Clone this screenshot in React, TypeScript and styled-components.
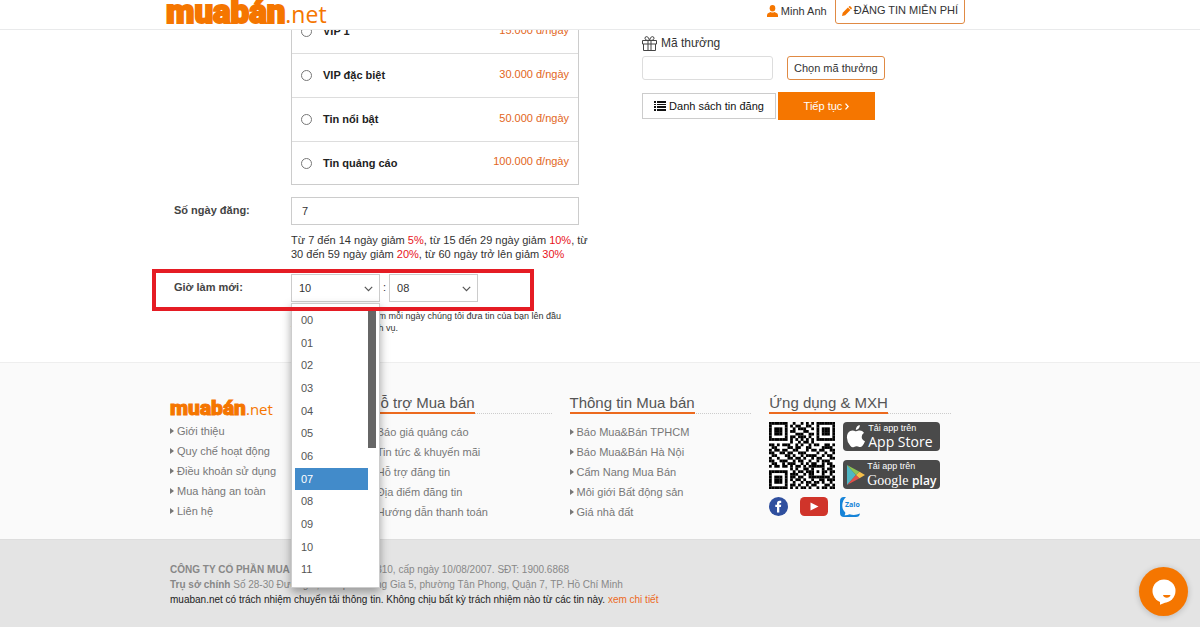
import React from "react";
import styled, { createGlobalStyle } from "styled-components";

const orange = "#f57600";
const sans = '"Liberation Sans", Arial, sans-serif';

const GlobalStyle = createGlobalStyle`
  *, *::before, *::after { box-sizing: border-box; }
  body { margin: 0; background: #fff; color: #333; font: 11px/15px ${sans}; }
  button, input, select { font: inherit; color: inherit; margin: 0; }
  a { color: inherit; text-decoration: none; }
  ul { list-style: none; margin: 0; padding: 0; }
  p, h2 { margin: 0; }
`;

const Container = styled.div`
  padding: 0 235px 0 166px;
`;

const Header = styled.header`
  position: fixed;
  inset: 0 0 auto 0;
  z-index: 5;
  height: 30px;
  overflow: hidden;
  background: #fff;
  border-bottom: 1px solid #e9eaeb;
`;

const HeaderBar = styled(Container)`
  display: flex;
  justify-content: space-between;
  align-items: flex-end;
  height: 24px;
`;

const Logo = styled.a<{ $small?: boolean }>`
  display: flex;
  align-items: baseline;
  color: ${orange};
  font: 900 ${(p) => (p.$small ? "21px/20px" : "33px/32px")} Roboto, sans-serif;
  -webkit-text-stroke: ${(p) => (p.$small ? 1 : 2)}px ${orange};
  span {
    font: 500 ${(p) => (p.$small ? "15px/20px" : "23px/32px")} "Open Sans", sans-serif;
    -webkit-text-stroke: 0;
  }
`;

const HeaderLogo = styled(Logo)`
  margin-bottom: -6px;
`;

const Actions = styled.nav`
  display: flex;
  align-items: flex-end;
  gap: 8px;
`;

const User = styled.a`
  display: flex;
  align-items: center;
  gap: 3px;
  height: 26px;
`;

const OutlineButton = styled.button`
  display: flex;
  align-items: center;
  justify-content: center;
  gap: 2px;
  height: 24px;
  padding: 0 6px;
  background: #fff;
  border: 1px solid #e08a44;
  border-radius: 3px;
  white-space: nowrap;
`;

const PostButton = styled(OutlineButton)`
  height: 27px;
`;

const Main = styled.main`
  padding-top: 10px;
`;

const Columns = styled(Container)`
  display: grid;
  grid-template-columns: 413px 1fr;
  gap: 63px;
  min-height: 352px;
`;

const Form = styled.form`
  display: grid;
  grid-template-columns: 125px minmax(0, 1fr);
  align-content: start;
`;

const Plans = styled.div`
  grid-column: 2;
  border: 1px solid #ccc;
  border-top: 0;
  margin-bottom: 12px;
`;

const Plan = styled.label`
  display: flex;
  align-items: center;
  height: 44px;
  padding: 0 9px;
  color: #222;
  font-weight: 700;
  border-bottom: 1px solid #ddd;
  &:last-child { height: 42px; border-bottom: 0; }
`;

const Radio = styled.input`
  appearance: none;
  width: 11px;
  height: 11px;
  margin: 0 11px 0 0;
  border: 1px solid #777;
  border-radius: 50%;
`;

const Price = styled.span`
  margin-left: auto;
  padding-bottom: 3px;
  color: #e2661c;
  font-weight: 400;
`;

const Label = styled.label`
  padding: 6px 8px;
  font-weight: 700;
  color: #444;
`;

const DaysInput = styled.input`
  height: 28px;
  padding: 0 10px;
  background: #fff;
  border: 1px solid #ccc;
`;

const Hint = styled.p`
  grid-column: 2;
  padding: 8px 0 13px;
  line-height: 14px;
  white-space: nowrap;
  b { font-weight: 400; color: #e8131b; }
`;

const RefreshRow = styled.div`
  position: relative;
  grid-column: 1 / -1;
  display: grid;
  grid-template-columns: 125px 1fr;
`;

const Highlight = styled.div`
  position: absolute;
  z-index: 4;
  inset: -5px 45px -9px -14px;
  border: 4px solid #e51c24;
  pointer-events: none;
`;

const Times = styled.div`
  display: flex;
  gap: 3px;
`;

const Colon = styled.span`
  line-height: 26px;
`;

const TimeField = styled.div`
  position: relative;
  width: 89px;
`;

const TimeSelect = styled.select`
  appearance: none;
  width: 100%;
  height: 28px;
  padding: 0 7px;
  background: #fff;
  border: 1px solid #ccc;
  border-radius: 0;
`;

const Chevron = styled.svg`
  position: absolute;
  right: 7px;
  top: 12px;
`;

const Menu = styled.div`
  position: absolute;
  z-index: 3;
  top: 29px;
  left: 0;
  display: flex;
  width: 89px;
  height: 285px;
  padding: 5px 3px 6px;
  background: #fff;
  border: 1px solid #ccc;
  box-shadow: 0 4px 9px rgba(0, 0, 0, 0.35);
`;

const Options = styled.ul`
  flex: 1;
  display: flex;
  flex-direction: column;
`;

const Option = styled.li<{ $active: boolean }>`
  flex: 1;
  display: flex;
  align-items: center;
  padding: 0 6px;
  color: ${(p) => (p.$active ? "#fff" : "#555")};
  background: ${(p) => (p.$active ? "#428bca" : "transparent")};
`;

const Thumb = styled.div`
  width: 8px;
  height: 139px;
  background: #666;
`;

const Note = styled.p`
  grid-column: 2;
  padding-top: 8px;
  font-size: 9px;
  line-height: 12px;
  white-space: nowrap;
`;

const Side = styled.section`
  padding-top: 25px;
`;

const RewardLabel = styled.label`
  display: flex;
  align-items: center;
  gap: 4px;
  height: 16px;
  margin-bottom: 5px;
  font-size: 12px;
`;

const SideRow = styled.div<{ $gap: number }>`
  display: flex;
  align-items: center;
  gap: ${(p) => p.$gap}px;
  margin-bottom: 12px;
`;

const RewardInput = styled.input`
  width: 131px;
  height: 24px;
  border: 1px solid #ddd;
  border-radius: 3px;
`;

const ListButton = styled.button`
  display: flex;
  align-items: center;
  justify-content: center;
  gap: 3px;
  width: 134px;
  height: 26px;
  padding: 0;
  background: #fff;
  border: 1px solid #ccc;
  color: #111;
`;

const NextButton = styled.button`
  width: 97px;
  height: 28px;
  border: 0;
  color: #fff;
  background: ${orange};
`;

const FooterLinks = styled.footer`
  background: #fafafa;
  border-top: 1px solid #eee;
`;

const FooterGrid = styled(Container)`
  display: grid;
  grid-template-columns: repeat(4, minmax(0, 1fr));
  height: 176px;
  padding-top: 31px;
`;

const FooterColumn = styled.section`
  padding: 0 14px 0 4px;
`;

const FooterLogo = styled(Logo)`
  margin-top: 4px;
  margin-bottom: 2px;
`;

const Heading = styled.h2`
  display: flex;
  height: 20px;
  margin-bottom: 8px;
  font: 400 15px/17px ${sans};
  color: #555;
  white-space: nowrap;
  border-bottom: 1px dotted #ccc;
  span { height: 20px; border-bottom: 2px solid #ec6a1e; }
`;

const Item = styled.li`
  height: 20px;
  line-height: 20px;
  color: #777;
  white-space: nowrap;
  a { display: flex; align-items: center; gap: 3px; }
  a::before {
    content: "";
    border-left: 4px solid #777;
    border-top: 3px solid transparent;
    border-bottom: 3px solid transparent;
  }
`;

const Apps = styled.div`
  display: flex;
  gap: 8px;
  margin-bottom: 8px;
`;

const Stores = styled.div`
  display: flex;
  flex-direction: column;
  justify-content: space-between;
`;

const Store = styled.a`
  display: flex;
  align-items: center;
  gap: 2px;
  width: 97px;
  height: 29px;
  padding: 0 3px;
  border-radius: 4px;
  background: #4a4a4a;
  color: #fff;
  white-space: nowrap;
`;

const StoreText = styled.span`
  display: flex;
  flex-direction: column;
  font: 14px/16px "Open Sans", sans-serif;
  small { font: 9px/11px ${sans}; }
  i { font: 14px/16px "Liberation Serif", serif; }
  strong { font: 600 12px/16px "Open Sans", sans-serif; }
`;

const Socials = styled.div`
  display: flex;
  gap: 12px;
  a, svg { display: block; }
`;

const Legal = styled.div`
  min-height: 88px;
  background: #e4e4e4;
  border-top: 1px solid #ddd;
`;

const LegalText = styled(Container)`
  padding-top: 22px;
  padding-left: 170px;
  font-size: 10px;
  color: #888;
  white-space: nowrap;
  p:last-child { color: #222; }
  a { color: #ec6a1e; }
`;

const Chat = styled.button`
  position: fixed;
  z-index: 6;
  right: 12px;
  bottom: 11px;
  display: grid;
  place-items: center;
  width: 49px;
  height: 49px;
  padding: 0;
  border: 0;
  border-radius: 50%;
  background: ${orange};
  box-shadow: 0 1px 6px rgba(0, 0, 0, 0.2);
`;

const plans = [
  ["VIP 1", "15.000 đ/ngày"],
  ["VIP đặc biệt", "30.000 đ/ngày"],
  ["Tin nổi bật", "50.000 đ/ngày"],
  ["Tin quảng cáo", "100.000 đ/ngày"],
];
const hours = ["00", "01", "02", "03", "04", "05", "06", "07", "08", "09", "10", "11"];
const about = ["Giới thiệu", "Quy chế hoạt động", "Điều khoản sử dụng", "Mua hàng an toàn", "Liên hệ"];
const support = ["Báo giá quảng cáo", "Tin tức & khuyến mãi", "Hỗ trợ đăng tin", "Địa điểm đăng tin", "Hướng dẫn thanh toán"];
const info = ["Báo Mua&Bán TPHCM", "Báo Mua&Bán Hà Nội", "Cẩm Nang Mua Bán", "Môi giới Bất động sản", "Giá nhà đất"];

const qr = [
  "1111111001001010101111111",
  "1000001010110011001000001",
  "1011101001011100101011101",
  "1011101011000110001011101",
  "1011101000111001101011101",
  "1000001011011101001000001",
  "1111111010101010101111111",
  "0000000010010110100000000",
  "1101011100101001011001101",
  "0110000110110011000011110",
  "1011011001100010110110011",
  "1100110110011100001001001",
  "0110001101001011110010110",
  "1001000110110100101100011",
  "1100111001011001001011100",
  "0110010111001010110010110",
  "1011011010110101111110011",
  "0000000010100110100010110",
  "1111111001011011101011011",
  "1000001011100101100010010",
  "1011101011011001111111101",
  "1011101010110100100110111",
  "1011101001001011011010010",
  "1000001011010010110001101",
  "1111111010101101001011011",
];

function LinkList({ items }: { items: string[] }) {
  return <ul>{items.map((t) => <Item key={t}><a href="#">{t}</a></Item>)}</ul>;
}

function ChevronIcon() {
  return (
    <Chevron width="9" height="6" viewBox="0 0 9 6" fill="none" stroke="#555" strokeWidth="1.2">
      <path d="M0.8 0.8 4.5 4.6 8.2 0.8" />
    </Chevron>
  );
}

export default function App() {
  return (
    <>
      <GlobalStyle />
      <Header>
        <HeaderBar>
          <HeaderLogo href="#">muabán<span>.net</span></HeaderLogo>
          <Actions>
            <User href="#">
              <svg width="11" height="12" viewBox="0 0 11 12" fill={orange}>
                <ellipse cx="5.5" cy="3.3" rx="2.8" ry="3.3" />
                <path d="M0 12V10Q0 8 2.5 7.5L3.6 7Q5.5 8.2 7.4 7L8.5 7.5Q11 8 11 10V12Z" />
              </svg>
              Minh Anh
            </User>
            <PostButton type="button">
              <svg width="10" height="10" viewBox="0 0 10 10" fill={orange}>
                <path d="M0 10 .7 6.8 5.9 1.6 8.4 4.1 3.2 9.3ZM6.5 1 7.3.2Q7.8-.1 8.3.3L9.7 1.7Q10.1 2.2 9.7 2.7L9 3.5Z" />
              </svg>
              ĐĂNG TIN MIỄN PHÍ
            </PostButton>
          </Actions>
        </HeaderBar>
      </Header>
      <Main>
        <Columns>
          <Form>
            <Plans>
              {plans.map(([name, price]) => (
                <Plan key={name}>
                  <Radio type="radio" name="plan" />
                  {name}
                  <Price>{price}</Price>
                </Plan>
              ))}
            </Plans>
            <Label htmlFor="days">Số ngày đăng:</Label>
            <DaysInput id="days" defaultValue="7" />
            <Hint>
              Từ 7 đến 14 ngày giảm <b>5%</b>, từ 15 đến 29 ngày giảm <b>10%</b>, từ<br />
              30 đến 59 ngày giảm <b>20%</b>, từ 60 ngày trở lên giảm <b>30%</b>
            </Hint>
            <RefreshRow>
              <Label htmlFor="hour">Giờ làm mới:</Label>
              <Times>
                <TimeField>
                  <TimeSelect id="hour" defaultValue="10">
                    {hours.map((h) => <option key={h}>{h}</option>)}
                  </TimeSelect>
                  <ChevronIcon />
                  <Menu>
                    <Options role="listbox" aria-label="Giờ">
                      {hours.map((h) => (
                        <Option key={h} role="option" aria-selected={h === "07"} $active={h === "07"}>{h}</Option>
                      ))}
                    </Options>
                    <Thumb />
                  </Menu>
                </TimeField>
                <Colon>:</Colon>
                <TimeField>
                  <TimeSelect aria-label="Phút" defaultValue="08">
                    {hours.map((h) => <option key={h}>{h}</option>)}
                  </TimeSelect>
                  <ChevronIcon />
                </TimeField>
              </Times>
              <Highlight />
            </RefreshRow>
            <Note>
              Bạn hãy chọn thời điểm mỗi ngày chúng tôi đưa tin của bạn lên đầu<br />
              trang nếu sử dụng dịch vụ.
            </Note>
          </Form>
          <Side>
            <RewardLabel htmlFor="reward">
              <svg width="15" height="15" viewBox="0 0 15 15" fill="none" stroke="#444">
                <path d="M.5 4.5H14.5V8H.5ZM1.5 8V14.5H13.5V8M6 4.5V14.5M9 4.5V14.5M7.5 4.5Q3 4.5 3 2.3 3 .5 4.8.6 6.8.8 7.5 4.5 8.2.8 10.2.6 12 .5 12 2.3 12 4.5 7.5 4.5" />
              </svg>
              Mã thưởng
            </RewardLabel>
            <SideRow $gap={14}>
              <RewardInput id="reward" />
              <OutlineButton type="button">Chọn mã thưởng</OutlineButton>
            </SideRow>
            <SideRow $gap={2}>
              <ListButton type="button">
                <svg width="12" height="10" viewBox="0 0 12 10" fill="#111">
                  <path d="M0 0h2v2H0zM3 0h9v2H3zM0 3h2v1H0zM3 3h9v1H3zM0 5h2v2H0zM3 5h9v2H3zM0 8h2v2H0zM3 8h9v2H3z" />
                </svg>
                Danh sách tin đăng
              </ListButton>
              <NextButton type="button">
                Tiếp tục{" "}
                <svg width="4" height="7" viewBox="0 0 4 7" fill="none" stroke="#fff" strokeWidth="1.3">
                  <path d="M.5.6 3.2 3.5.5 6.4" />
                </svg>
              </NextButton>
            </SideRow>
          </Side>
        </Columns>
      </Main>
      <FooterLinks>
        <FooterGrid>
          <FooterColumn>
            <FooterLogo href="#" $small>muabán<span>.net</span></FooterLogo>
            <LinkList items={about} />
          </FooterColumn>
          <FooterColumn>
            <Heading><span>Hỗ trợ Mua bán</span></Heading>
            <LinkList items={support} />
          </FooterColumn>
          <FooterColumn>
            <Heading><span>Thông tin Mua bán</span></Heading>
            <LinkList items={info} />
          </FooterColumn>
          <FooterColumn>
            <Heading><span>Ứng dụng &amp; MXH</span></Heading>
            <Apps>
              <svg width="66" height="67" viewBox="0 0 25 25" preserveAspectRatio="none">
                <rect width="25" height="25" fill="#fff" />
                {qr.map((row, y) => [...row].map((c, x) => c === "1" && <rect key={`${x}-${y}`} x={x} y={y} width="1.05" height="1.05" />))}
              </svg>
              <Stores>
                <Store href="#">
                  <svg width="20" height="23" viewBox="0 0 20 23" fill="#fff">
                    <path d="M13.8 0Q14 2 12.7 3.6 11.4 5 9.8 5 9.7 3 11 1.5 12.2.2 13.8 0ZM10 6.3Q11 6.3 12.6 5.6 15.8 4.8 18 7.7 15.5 9.4 15.7 12 15.9 15 19 16.3 18 19 16.3 21 15 22.6 13.3 21.9 10.5 20.8 8 22 6 23 4.3 20.8 1 17 .9 12.5.9 7.5 4.3 5.9 6.2 5 8.2 5.8 9.3 6.3 10 6.3Z" />
                  </svg>
                  <StoreText><small>Tải app trên</small>App Store</StoreText>
                </Store>
                <Store href="#">
                  <svg width="19" height="22" viewBox="0 0 19 22">
                    <path d="M1 1V21L10 11Z" fill="#4fb6c4" />
                    <path d="M1 1 10 11 13.5 7.7Z" fill="#8fc456" />
                    <path d="M1 21 10 11 13.5 14.3Z" fill="#e0504a" />
                    <path d="M10 11 13.5 7.7 19 11 13.5 14.3Z" fill="#f5bf4a" />
                  </svg>
                  <StoreText><small>Tải app trên</small><span><i>Google</i> <strong>play</strong></span></StoreText>
                </Store>
              </Stores>
            </Apps>
            <Socials>
              <a href="#" aria-label="Facebook">
                <svg width="19" height="19" viewBox="0 0 19 19">
                  <circle cx="9.5" cy="9.5" r="9.5" fill="#2f4f9e" />
                  <path d="M8 15.5V10H6.3V7.7H8V6.2Q8 3.7 10.5 3.7H12.2V6H11Q10.3 6 10.3 6.7V7.7H12.2L11.9 10H10.3V15.5Z" fill="#fff" />
                </svg>
              </a>
              <a href="#" aria-label="YouTube">
                <svg width="28" height="19" viewBox="0 0 28 19">
                  <rect width="28" height="19" rx="4.5" fill="#d0342a" />
                  <path d="M10.5 5.5V13.5L18.5 9.5Z" fill="#fff" />
                </svg>
              </a>
              <a href="#" aria-label="Zalo">
                <svg width="20" height="20" viewBox="0 0 20 20">
                  <path d="M4 0Q0 0 0 4V16Q0 20 4 20H16Q19.5 20 20 16.5 15 19 9.5 17.3 7 18.5 4.5 18.2 5.5 17 5.2 15.5 2 12.5 2.3 8 2.6 3 6 0Z" fill="#1583d8" />
                  <text x="5" y="10" fontFamily="Open Sans, sans-serif" fontSize="7" fontWeight="700" fill="#1583d8">Zalo</text>
                </svg>
              </a>
            </Socials>
          </FooterColumn>
        </FooterGrid>
      </FooterLinks>
      <Legal>
        <LegalText>
          <p><b>CÔNG TY CỔ PHẦN MUA BÁN</b> MS: 0304991310, cấp ngày 10/08/2007. SĐT: 1900.6868</p>
          <p><b>Trụ sở chính</b> Số 28-30 Đường 2, Khu phố Hưng Gia 5, phường Tân Phong, Quận 7, TP. Hồ Chí Minh</p>
          <p>muaban.net có trách nhiệm chuyển tải thông tin. Không chịu bất kỳ trách nhiệm nào từ các tin này. <a href="#">xem chi tiết</a></p>
        </LegalText>
      </Legal>
      <Chat type="button" aria-label="Chat">
        <svg width="24" height="26" viewBox="0 0 24 26" fill="#fff">
          <circle cx="12" cy="12" r="11.5" />
          <path d="M8 21V25.7Q12 24.5 15 22.5Z" />
          <path d="M11 16H18.5Q17.8 18.8 14.8 18.8 11.7 18.8 11 16Z" fill={orange} />
        </svg>
      </Chat>
    </>
  );
}
